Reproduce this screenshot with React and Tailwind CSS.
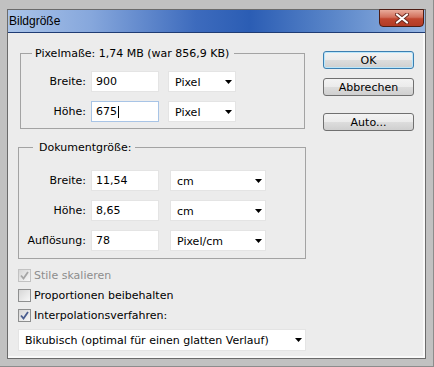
import React from 'react';

const Arrow = () => (
  <svg width="7" height="4" viewBox="0 0 7 4" className="shrink-0">
    <polygon points="0,0 7,0 3.5,4" fill="#000" />
  </svg>
);

const TextBox = ({ value, focused }) => (
  <div
    className={
      'ml-[5px] w-[68px] h-[21px] bg-white border flex items-center pl-[4px] ' +
      (focused ? 'border-[#a8c4e6]' : 'border-[#e4e4e4]')
    }
  >
    <span>{value}</span>
    {focused && <span className="ml-px w-px h-[12px] bg-black" />}
  </div>
);

const Select = ({ value, className }) => (
  <div
    className={
      'h-[21px] bg-white border border-[#e4e4e4] flex items-center justify-between pl-[6px] pr-[3px] ' +
      className
    }
  >
    <span className="pt-px">{value}</span>
    <Arrow />
  </div>
);

const Check = ({ checked, disabled }) => (
  <div
    className={
      'w-[13px] h-[13px] border flex items-center justify-center bg-[linear-gradient(135deg,#d6d6d6,#f7f7f7)] ' +
      (disabled ? 'border-[#c2c2c2]' : 'border-[#8e8f8f]')
    }
  >
    {checked && (
      <svg width="11" height="11" viewBox="0 0 11 11">
        <polyline
          points="2,5.5 4.5,8.5 9,2"
          fill="none"
          stroke={disabled ? '#a6a6a6' : '#4a5d8f'}
          strokeWidth="1.8"
        />
      </svg>
    )}
  </div>
);

const Button = ({ children, primary }) => (
  <div
    className={
      'w-[91px] h-[18px] rounded-[3px] border flex items-center justify-center bg-[linear-gradient(to_bottom,#f3f3f3_0%,#ebebeb_50%,#dddddd_50%,#cfcfcf_100%)] ' +
      (primary ? 'border-[#3c7fb1] shadow-[inset_0_0_0_1px_#b9e6fb]' : 'border-[#707070]')
    }
  >
    {children}
  </div>
);

export default function App() {
  return (
    <div className="w-[434px] h-[367px] bg-[#c1c1c1] pt-[9px] px-[7px] pb-[7px] flex flex-col font-['DejaVu_Sans',sans-serif] text-[11px] leading-[13px] text-black border-r border-b border-[#8c8c8c]">
      <div className="relative flex-1 flex flex-col border border-[#6b6b6b]">
        {/* title bar */}
        <div className="h-[23px] shrink-0 flex items-center pl-px border-b border-[#1f3c74] bg-[linear-gradient(to_right,#aac4e9_0%,#86a7dc_20%,#3d6bbd_45%,#2b5db4_58%,#5a86c9_78%,#95b5e2_100%)]">
          <span className="font-['Liberation_Sans',sans-serif] text-[12px]">Bildgröße</span>
        </div>
        <div className="absolute top-[-1px] right-[1px] w-[45px] h-[18px] rounded-b-[4px] border border-[#4d1d14] bg-[linear-gradient(to_bottom,#e9ab9b_0%,#d2705c_45%,#c0462f_55%,#b23b26_100%)] flex items-center justify-center">
          <svg width="14" height="11" viewBox="0 0 14 11">
            <path d="M2 1.5 L12 9.5 M12 1.5 L2 9.5" stroke="#6a2a20" strokeWidth="4" strokeLinecap="round" />
            <path d="M2 1.5 L12 9.5 M12 1.5 L2 9.5" stroke="#fff" strokeWidth="2.2" strokeLinecap="round" />
          </svg>
        </div>

        {/* client area */}
        <div className="flex-1 flex bg-[#ececec] border-r-2 border-b-2 border-[#f9f9f9]">
          <div className="pl-[10px] pt-[14px] w-[298px] flex flex-col">
            <fieldset className="ml-[2px] w-[285px] border border-[#a3a3a3] pt-[11px] pb-[6px]">
              <legend className="ml-[11px] pl-[3px] pr-[5px]">Pixelmaße: 1,74 MB (war 856,9 KB)</legend>
              <div className="flex flex-col gap-[9px]">
                <div className="flex items-center">
                  <div className="w-[65px] text-right">Breite:</div>
                  <TextBox value="900" />
                  <Select value="Pixel" className="ml-[9px] w-[68px]" />
                </div>
                <div className="flex items-center">
                  <div className="w-[65px] text-right">Höhe:</div>
                  <TextBox value="675" focused />
                  <Select value="Pixel" className="ml-[9px] w-[68px]" />
                </div>
              </div>
            </fieldset>

            <fieldset className="mt-[12px] w-[288px] border border-[#a3a3a3] pt-[16px] pb-[7px]">
              <legend className="ml-[14px] pl-[6px] pr-[4px]">Dokumentgröße:</legend>
              <div className="flex flex-col gap-[9px]">
                <div className="flex items-center">
                  <div className="w-[67px] text-right">Breite:</div>
                  <TextBox value="11,54" />
                  <Select value="cm" className="ml-[11px] w-[96px]" />
                </div>
                <div className="flex items-center">
                  <div className="w-[67px] text-right">Höhe:</div>
                  <TextBox value="8,65" />
                  <Select value="cm" className="ml-[11px] w-[96px]" />
                </div>
                <div className="flex items-center">
                  <div className="w-[67px] text-right">Auflösung:</div>
                  <TextBox value="78" />
                  <Select value="Pixel/cm" className="ml-[11px] w-[96px]" />
                </div>
              </div>
            </fieldset>

            <div className="mt-[6px] flex flex-col">
              <div className="h-[20px] flex items-center gap-[3px] text-[#8d8d8d]">
                <Check checked disabled />
                <span>Stile skalieren</span>
              </div>
              <div className="h-[20px] flex items-center gap-[3px]">
                <Check />
                <span>Proportionen beibehalten</span>
              </div>
              <div className="h-[20px] flex items-center gap-[3px]">
                <Check checked />
                <span>Interpolationsverfahren:</span>
              </div>
            </div>

            <Select value="Bikubisch (optimal für einen glatten Verlauf)" className="mt-[4px] w-[288px] !h-[22px]" />
          </div>

          <div className="ml-[17px] pt-[18px] flex flex-col">
            <Button primary>OK</Button>
            <div className="mt-[9px]">
              <Button>Abbrechen</Button>
            </div>
            <div className="mt-[17px]">
              <Button>Auto...</Button>
            </div>
          </div>
        </div>
      </div>
    </div>
  );
}
